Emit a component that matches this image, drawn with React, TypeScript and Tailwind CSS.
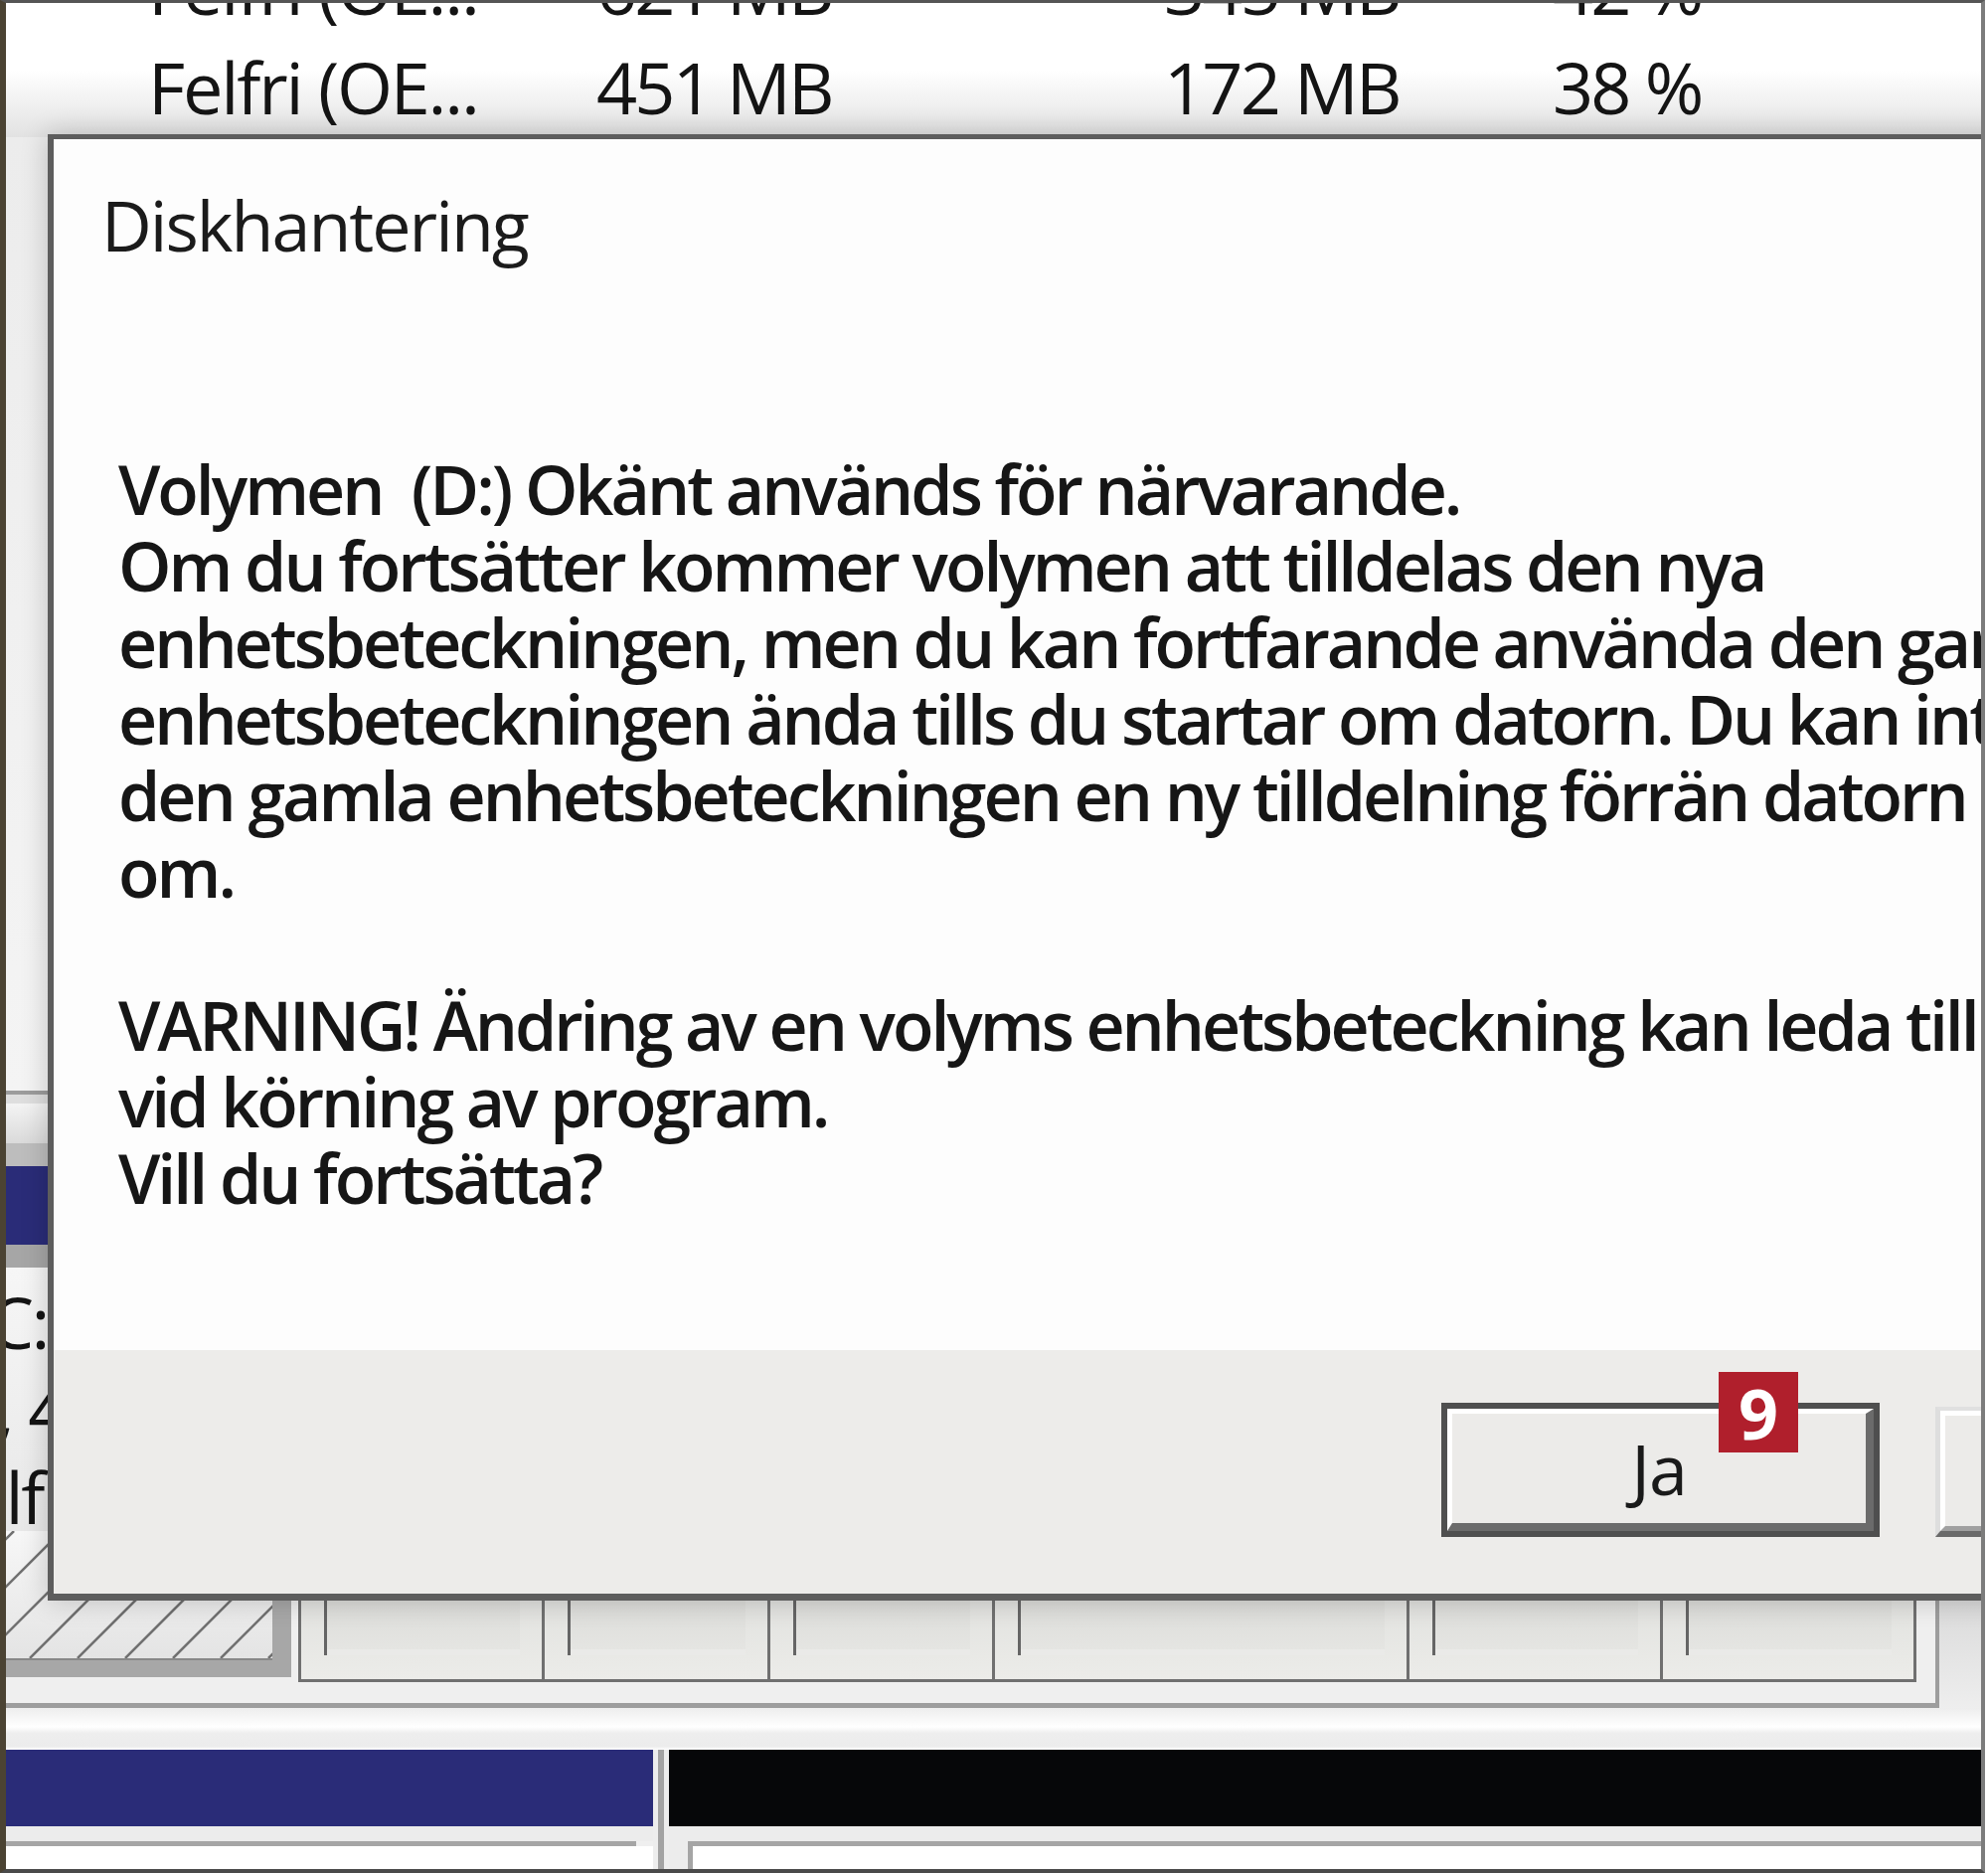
const sans = "font-['Open_Sans','Noto_Sans',sans-serif]";

const listRows = [
  { name: 'Felfri (OE...', size: '621 MB', free: '345 MB', pct: '42 %' },
  { name: 'Felfri (OE...', size: '451 MB', free: '172 MB', pct: '38 %' },
];

const bodyLines = [
  'Volymen  (D:) Okänt används för närvarande.',
  'Om du fortsätter kommer volymen att tilldelas den nya',
  'enhetsbeteckningen, men du kan fortfarande använda den gamla',
  'enhetsbeteckningen ända tills du startar om datorn. Du kan inte ge',
  'den gamla enhetsbeteckningen en ny tilldelning förrän datorn startats',
  'om.',
  '',
  'VARNING! Ändring av en volyms enhetsbeteckning kan leda till att fel uppstår',
  'vid körning av program.',
  'Vill du fortsätta?',
];

const cells = [245, 227, 226, 417, 255, 255];

function ListRow({ name, size, free, pct }: { name: string; size: string; free: string; pct: string }) {
  return (
    <div className="flex h-[100px] items-center whitespace-nowrap text-[72px] leading-[100px] tracking-[-2.8px] text-[#141414]">
      <div className="w-[594px] pl-[143px] tracking-[-2.2px]">{name}</div>
      <div className="w-[571px]">{size}</div>
      <div className="w-[391px]">{free}</div>
      <div>{pct}</div>
    </div>
  );
}

function Hatch() {
  return (
    <svg width="268" height="128" viewBox="0 0 268 128" className="block">
      <defs>
        <linearGradient id="hg" x1="0" y1="0" x2="0" y2="1">
          <stop offset="0" stopColor="#f7f7f7" />
          <stop offset="1" stopColor="#e4e4e4" />
        </linearGradient>
      </defs>
      <rect width="268" height="128" fill="url(#hg)" />
      {Array.from({ length: 10 }).map((_, i) => {
        const x = -120 + i * 48;
        return <line key={i} x1={x} y1={128} x2={x + 128} y2={0} stroke="#707070" strokeWidth="2.5" />;
      })}
    </svg>
  );
}

function Cell({ w }: { w: number }) {
  return (
    <div
      className="h-[152px] shrink-0 border-b-[3px] border-l-[3px] border-[#707070] bg-[linear-gradient(to_bottom,#d8d9d6,#ecece9)] pl-[23px] pr-[22px]"
      style={{ width: w }}
    >
      <div className="h-[125px] border-l-[3px] border-[#656565] bg-[linear-gradient(to_bottom,#cfd0cd,#e6e6e3)] shadow-[inset_0_-6px_0_#eaeae8]" />
    </div>
  );
}

export default function App() {
  return (
    <div className={`h-[1884px] w-[2000px] bg-white pr-[3px] ${sans}`}>
      <div className="relative flex h-full flex-col overflow-hidden border-t-[3px] border-r-[4px] border-b-[4px] border-l-[6px] border-t-[#555555] border-r-[#7c7c7c] border-b-[#4a4a4a] border-l-[#4b4333] bg-[#efefef]">
        {/* volume list */}
        <div className="h-[135px] shrink-0 overflow-hidden bg-[linear-gradient(to_bottom,#ffffff_50%,#e2e2e2)]">
          <div className="mt-[-66px]">
            {listRows.map((r, i) => (
              <ListRow key={i} {...r} />
            ))}
          </div>
        </div>

        {/* graphical view, left strip */}
        <div className="flex h-[1402px] shrink-0">
          <div className="flex w-[42px] flex-col overflow-hidden">
            <div className="h-[959px] bg-[linear-gradient(to_bottom,#ececec,#f4f4f4)]" />
            <div className="h-[4px] bg-[#9c9c9c]" />
            <div className="h-[9px] bg-[#dedede]" />
            <div className="h-[40px] bg-[linear-gradient(to_bottom,#f4f4f4,#dadada)]" />
            <div className="h-[23px] bg-[#bdbdbd]" />
            <div className="h-[79px] bg-[#2a2c78]" />
            <div className="h-[23px] bg-[#a6a6a6]" />
            <div className="h-[265px] whitespace-nowrap bg-[linear-gradient(to_bottom,#f6f6f6,#e8e8e8)] pt-[10px] text-[72px] leading-[88px] tracking-[-2.5px] text-[#141414]">
              <div className="ml-[-36px]">(C:)</div>
              <div className="ml-[-10px]">, 465,13 GB NTFS</div>
              <div className="ml-[-73px]">Felfri (Startenhet)</div>
            </div>
          </div>
        </div>

        {/* graphical view, bottom */}
        <div className="flex h-[340px] shrink-0 flex-col">
          <div className="flex h-[178px] shrink-0">
            <div className="flex w-[1945px] shrink-0 border-r-[4px] border-b-[5px] border-[#9d9d9d]">
              <div className="h-[147px] w-[287px] shrink-0 border-r-[19px] border-b-[19px] border-[#a7a7a7]">
                <div className="border-b-[2px] border-[#888888]">
                  <Hatch />
                </div>
              </div>
              <div className="ml-[7px] flex">
                {cells.map((w, i) => (
                  <Cell key={i} w={w} />
                ))}
                <div className="h-[152px] w-[3px] bg-[#707070]" />
              </div>
            </div>
            <div className="flex-1 bg-[linear-gradient(to_bottom,#cdcdcd,#eeeeee)]" />
          </div>
          <div className="h-[42px] shrink-0 bg-[linear-gradient(to_bottom,#ededed,#ffffff_45%,#eeeeee_60%,#ececec_92%,#ffffff)]" />
          <div className="flex h-[77px] shrink-0">
            <div className="w-[651px] bg-[#2a2c78]" />
            <div className="flex w-[16px] justify-center bg-[#ededed]">
              <div className="w-[6px] bg-[#a3a3a3]" />
            </div>
            <div className="flex-1 bg-[#060709]" />
          </div>
          <div className="flex h-[43px] shrink-0">
            <div className="flex w-[651px] flex-col">
              <div className="h-[15px] bg-[#ececec]" />
              <div className="mr-[17px] h-[5px] bg-[#a5a5a5]" />
              <div className="flex-1 bg-white" />
            </div>
            <div className="flex w-[16px] justify-center bg-[#ededed]">
              <div className="w-[6px] bg-[#a3a3a3]" />
            </div>
            <div className="flex flex-1 flex-col">
              <div className="h-[15px] bg-[#ececec]" />
              <div className="flex flex-1">
                <div className="w-[19px] bg-[#ececec]" />
                <div className="flex flex-1 flex-col border-l-[5px] border-[#a5a5a5]">
                  <div className="h-[5px] bg-[#a5a5a5]" />
                  <div className="flex-1 bg-white" />
                </div>
              </div>
            </div>
          </div>
        </div>

        {/* dialog */}
        <div className="absolute top-[132px] left-[42px] w-[2100px] border-t-[5px] border-b-[7px] border-l-[6px] border-[#5d5d5d] shadow-[0_0_26px_rgba(0,0,0,0.2)]">
          <div className="h-[1218px] overflow-hidden bg-[#fdfdfd] pt-[51px] pl-[48px]">
            <div className="text-[70px] leading-[70px] tracking-[-2px] text-[#1b1b1b]">Diskhantering</div>
            <div className="mt-[192px] pl-[17px] text-[68px] leading-[77px] font-semibold tracking-[-3px] text-[#161616]">
              {bodyLines.map((l, i) => (
                <div key={i} className="h-[77px] whitespace-pre">
                  {l || '\u00a0'}
                </div>
              ))}
            </div>
          </div>
          <div className="flex h-[245px] gap-[56px] bg-[#edecea] pt-[53px] pl-[1396px]">
            <div className="relative h-[135px] w-[441px] shrink-0 border-[6px] border-[#4f4f4f]">
              <div className="flex h-full items-center justify-center border-t-[5px] border-r-[8px] border-b-[8px] border-l-[5px] border-t-white border-r-[#6b6b6b] border-b-[#6b6b6b] border-l-white bg-[#ecebe9] text-[70px] leading-none tracking-[-1px] text-[#1a1a1a]">
                Ja
              </div>
              <div className="absolute top-[-37px] left-[273px] flex h-[81px] w-[80px] items-center justify-center bg-[#b01f2c] text-[70px] leading-none font-bold text-white">
                9
              </div>
            </div>
            <div className="mt-[4px] h-[131px] w-[441px] shrink-0 border-t-[4px] border-r-[6px] border-b-[6px] border-l-[5px] border-t-[#e0e0e0] border-r-[#6a6a6a] border-b-[#6a6a6a] border-l-[#dedede]">
              <div className="h-full border-t-[5px] border-r-[5px] border-b-[5px] border-l-[5px] border-t-white border-r-[#a0a0a0] border-b-[#a0a0a0] border-l-white bg-[#ecebe9]" />
            </div>
          </div>
        </div>
      </div>
    </div>
  );
}
